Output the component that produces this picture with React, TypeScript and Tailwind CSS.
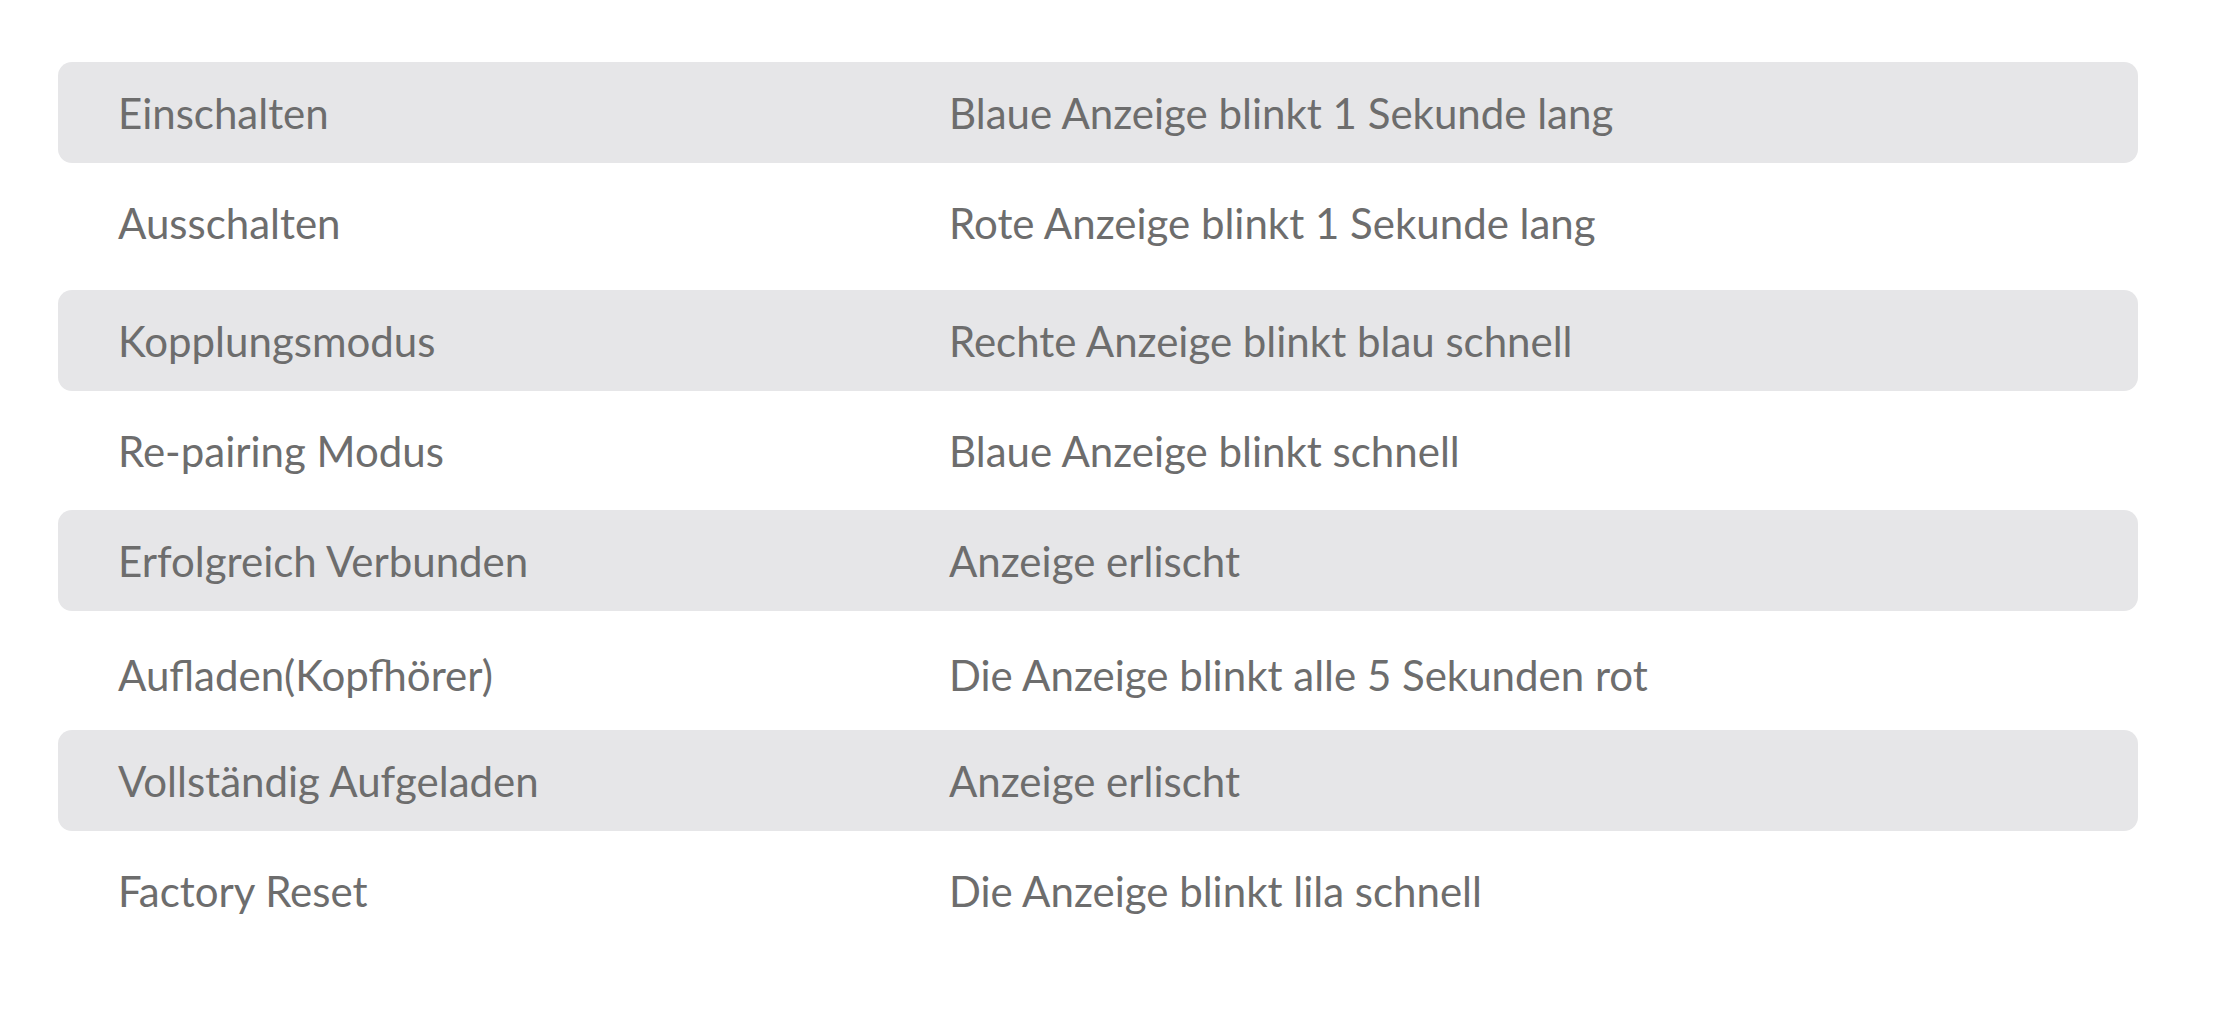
const rows = [
  { label: 'Einschalten', desc: 'Blaue Anzeige blinkt 1 Sekunde lang', shaded: true, cls: '' },
  { label: 'Ausschalten', desc: 'Rote Anzeige blinkt 1 Sekunde lang', shaded: false, cls: 'h-[127px] pb-[8px]' },
  { label: 'Kopplungsmodus', desc: 'Rechte Anzeige blinkt blau schnell', shaded: true, cls: '' },
  { label: 'Re-pairing Modus', desc: 'Blaue Anzeige blinkt schnell', shaded: false, cls: 'h-[119px]' },
  { label: 'Erfolgreich Verbunden', desc: 'Anzeige erlischt', shaded: true, cls: '' },
  { label: 'Aufladen(Kopfhörer)', desc: 'Die Anzeige blinkt alle 5 Sekunden rot', shaded: false, cls: 'h-[119px] pt-[8px]' },
  { label: 'Vollständig Aufgeladen', desc: 'Anzeige erlischt', shaded: true, cls: '' },
  { label: 'Factory Reset', desc: 'Die Anzeige blinkt lila schnell', shaded: false, cls: 'h-[119px]' },
];

export default function App() {
  return (
    <div
      className="w-[2222px] h-[1016px] bg-white pt-[62px] px-[58px] text-[#6d6d6d] text-[42px] leading-none"
      style={{ fontFamily: 'Lato, "Noto Sans", sans-serif' }}
    >
      <div className="flex flex-col w-[2080px]">
        {rows.map((r, i) => (
          <div
            key={i}
            className={
              r.shaded
                ? 'flex items-center h-[101px] bg-[#e6e6e8] rounded-[14px] pl-[60px]'
                : 'flex items-center pl-[60px] ' + r.cls
            }
          >
            <div className="w-[831px] shrink-0">{r.label}</div>
            <div>{r.desc}</div>
          </div>
        ))}
      </div>
    </div>
  );
}
